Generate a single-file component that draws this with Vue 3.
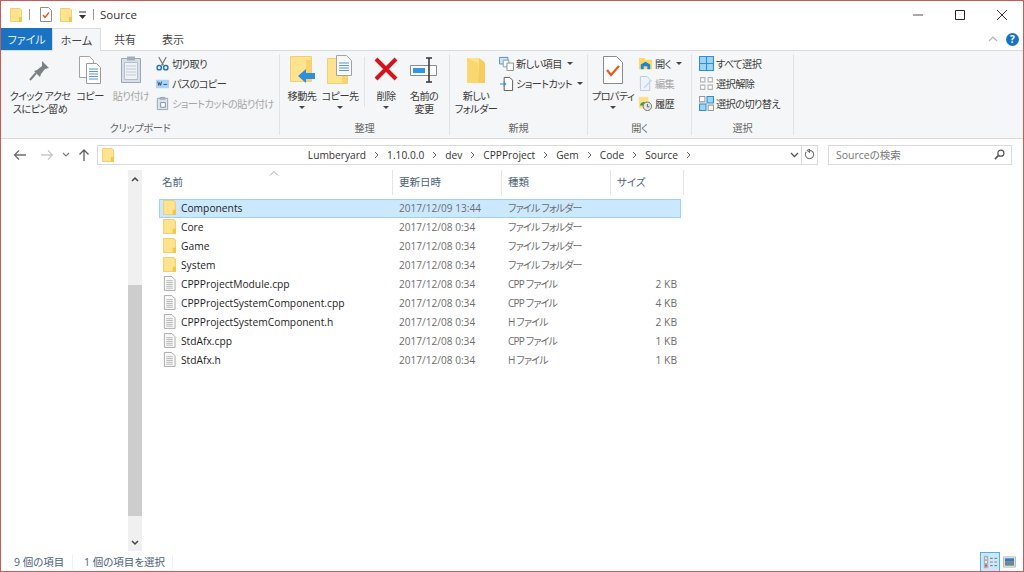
<template>
  <div class="window">
    <svg width="0" height="0" class="defs">
      <defs>
        <symbol id="folder" viewBox="0 0 12 14">
          <path d="M0.5 0.5h9.500l1.500 1.500v11.500h-11z" fill="#ffe38f" stroke="#f2cf73" stroke-width="1" />
          <path d="M9 9h3v5h-3z" fill="#f3c64c" />
        </symbol>
        <symbol id="doc" viewBox="0 0 14 16">
          <path d="M1.500 0.500h8l3.500 3.500v11.500h-11.500z" fill="#f8f8f8" stroke="#a8a8a8" />
          <path d="M3.500 5h7M3.500 7h7M3.500 9h7M3.500 11h7M3.500 13h7" stroke="#b4b4b4" stroke-width="1" />
        </symbol>
      </defs>
    </svg>

    <header class="titlebar">
      <svg class="qa-folder"><use href="#folder" /></svg>
      <i class="qa-sep"></i>
      <svg class="qa-check" viewBox="0 0 12 15">
        <path d="M.5.500h8l3 3v11h-11z" fill="#fff" stroke="#8f8f8f" />
        <path d="M3 8l2 2.500 4-5" fill="none" stroke="#e8541c" stroke-width="1.400" />
      </svg>
      <svg class="qa-folder second"><use href="#folder" /></svg>
      <svg class="qa-drop" viewBox="0 0 7 8">
        <path d="M0 1h7" stroke="#333" />
        <path d="M0 4h7l-3.500 4z" fill="#333" />
      </svg>
      <i class="qa-sep"></i>
      <span class="title">Source</span>
      <div class="win-btns">
        <svg viewBox="2 0 42 28"><path d="M18 14h10" stroke="#555" stroke-width="1" /></svg>
        <svg viewBox="2 0 42 28"><path d="M18.500 9.500h9v9h-9z" fill="none" stroke="#222" /></svg>
        <svg viewBox="2 0 42 28"><path d="M18 9l10 10M28 9l-10 10" stroke="#333" /></svg>
      </div>
    </header>

    <nav class="tabs">
      <div class="tab file">ファイル</div>
      <div class="tab active">ホーム</div>
      <div class="tab">共有</div>
      <div class="tab">表示</div>
      <div class="tab-right">
        <svg class="collapse" viewBox="0 0 10 6"><path d="M1 5l4-4 4 4" fill="none" stroke="#b5b5b5" stroke-width="1.200" /></svg>
        <span class="help">?</span>
      </div>
    </nav>

    <section class="ribbon">
      <div class="group g-clip">
        <div class="group-body">
          <div class="big w-pin">
            <svg class="big-ico" viewBox="0 0 28 30">
              <path d="M16 6l7 7-4 1-4 5-1 3-6-6 3-1 5-4z" fill="#7b7f86" />
              <path d="M10 18l-6 7" stroke="#7b7f86" stroke-width="2" />
            </svg>
            <span>クイック アクセ<br />スにピン留め</span>
          </div>
          <div class="big w-copy">
            <svg class="big-ico" viewBox="0 0 24 30">
              <path d="M1.500 1.500h10l4 4v17h-14z" fill="#fdfdfd" stroke="#a3a3a3" />
              <path d="M8.500 8.500h10l4 4v16h-14z" fill="#fff" stroke="#9a9a9a" />
              <path d="M11 14h9M11 16.500h9M11 19h9M11 21.500h9M11 24h9" stroke="#5a97d9" stroke-width="1.200" />
            </svg>
            <span>コピー</span>
          </div>
          <div class="big w-paste disabled">
            <svg class="big-ico" viewBox="0 0 24 30">
              <path d="M2.500 3.500h19v24h-19z" fill="#d8dfe9" stroke="#9aa6b6" />
              <path d="M5.500 7.500h13v17h-13z" fill="#eef1f6" stroke="#b5bdc9" />
              <path d="M8 1.500h8v4h-8z" fill="#a4aebb" />
              <path d="M7 11h10M7 14h10M7 17h10M7 20h10" stroke="#c2cad6" />
            </svg>
            <span>貼り付け</span>
          </div>
          <div class="small-col">
            <div class="small">
              <svg class="small-ico" viewBox="0 0 14 16">
                <path d="M3 1l5 9M11 1l-5 9" stroke="#7d7d7d" stroke-width="1.300" />
                <circle cx="3.500" cy="12.500" r="2.300" fill="none" stroke="#1d6fbf" stroke-width="1.500" />
                <circle cx="10.500" cy="12.500" r="2.300" fill="none" stroke="#1d6fbf" stroke-width="1.500" />
              </svg>
              <span>切り取り</span>
            </div>
            <div class="small">
              <svg class="small-ico" viewBox="0 0 14 16">
                <path d="M0 4h14v9h-14z" fill="#a9d3f2" />
                <path d="M2 6l1 4 1-3 1 3 1-4M8 9h4" fill="none" stroke="#34506c" />
              </svg>
              <span>パスのコピー</span>
            </div>
            <div class="small disabled">
              <svg class="small-ico" viewBox="0 0 14 16">
                <path d="M1.500 2.500h11v12h-11z" fill="#dbe3ee" stroke="#98a4b4" />
                <path d="M4 1h6v3h-6z" fill="#a4aebb" />
                <path d="M5 7h5v5h-5z" fill="#fff" stroke="#7d8ea3" />
              </svg>
              <span>ショートカットの貼り付け</span>
            </div>
          </div>
        </div>
        <div class="group-label">クリップボード</div>
      </div>

      <div class="group g-org">
        <div class="group-body">
          <div class="big w-move">
            <svg class="big-ico" viewBox="0 0 28 30">
              <path d="M2.500 1.500h21v25h-21z" fill="#ffe38f" stroke="#f2cf73" />
              <path d="M18 5h5v21h-5z" fill="#f7d56c" />
              <path d="M10 21l8-7v4h9v6h-9v4z" fill="#2f8fdf" />
            </svg>
            <span>移動先</span>
            <i class="caret"></i>
          </div>
          <div class="big w-copyto">
            <svg class="big-ico" viewBox="0 0 28 30">
              <path d="M1.500 3.500h20v25h-20z" fill="#ffe38f" stroke="#f2cf73" />
              <path d="M16 8h5v20h-5z" fill="#f7d56c" />
              <path d="M10.500.5h10l5 5v15h-15z" fill="#f8f8f8" stroke="#a3a3a3" />
              <path d="M13 8h10M13 10.500h10M13 13h10M13 15.500h10" stroke="#5a97d9" stroke-width="1.200" />
            </svg>
            <span>コピー先</span>
            <i class="caret"></i>
          </div>
          <i class="inner-sep"></i>
          <div class="big w-del">
            <svg class="big-ico" viewBox="0 0 24 30">
              <path d="M2 4l20 20M22 4l-20 20" stroke="#d3141c" stroke-width="4" />
            </svg>
            <span>削除</span>
            <i class="caret"></i>
          </div>
          <div class="big w-ren">
            <svg class="big-ico" viewBox="0 0 28 30">
              <path d="M.5 10.500h26v10h-26z" fill="#fbfbfb" stroke="#8c8c8c" />
              <path d="M3 13h12v5h-12z" fill="#2f96e8" />
              <path d="M16 3h6M16 27h6M19 3v24" stroke="#333" stroke-width="1.500" fill="none" />
            </svg>
            <span>名前の<br />変更</span>
          </div>
        </div>
        <div class="group-label">整理</div>
      </div>

      <div class="group g-new">
        <div class="group-body">
          <div class="big w-newf">
            <svg class="big-ico" viewBox="0 0 20 30">
              <path d="M1 3h12l6 4v21h-18z" fill="#ffe38f" />
              <path d="M1 3l11 5v20h-11z" fill="#fbd76f" />
              <path d="M13 3l6 5v20h-7z" fill="#f7ce5e" />
            </svg>
            <span>新しい<br />フォルダー</span>
          </div>
          <div class="small-col">
            <div class="small">
              <svg class="small-ico" viewBox="0 0 16 16">
                <path d="M.5 1.500h9v7h-9z" fill="#cfe3f5" stroke="#4d8fc9" />
                <path d="M4.500 4.500h6v7h-6z" fill="#fff" stroke="#7a9cc0" />
                <path d="M8.500 7.500h7v8h-7z" fill="#fff" stroke="#8c8c8c" />
              </svg>
              <span>新しい項目</span>
              <i class="caret inline"></i>
            </div>
            <div class="small">
              <svg class="small-ico" viewBox="0 0 16 16">
                <path d="M5.500 1.500h6l3 3v11h-9z" fill="#fff" stroke="#555" />
                <path d="M1 8h4V5.500L8 8.500l-3 3V9H1z" fill="#3d8fd1" />
              </svg>
              <span>ショートカット</span>
              <i class="caret inline"></i>
            </div>
          </div>
        </div>
        <div class="group-label">新規</div>
      </div>

      <div class="group g-open">
        <div class="group-body">
          <div class="big w-prop">
            <svg class="big-ico" viewBox="0 0 22 30">
              <path d="M1.500 1.500h13l6 6v21h-19z" fill="#fff" stroke="#8a8a8a" />
              <path d="M5 15l4 5 8-9" fill="none" stroke="#ea5a1c" stroke-width="2.200" />
            </svg>
            <span>プロパティ</span>
            <i class="caret"></i>
          </div>
          <div class="small-col">
            <div class="small">
              <svg class="small-ico" viewBox="0 0 16 16">
                <path d="M1 2h6l1 2h7v10h-14z" fill="#ffd765" />
                <path d="M3 14v-5l5-3 5 3v5h-3v-3h-4v3z" fill="#1a85d6" />
              </svg>
              <span>開く</span>
              <i class="caret inline"></i>
            </div>
            <div class="small disabled">
              <svg class="small-ico" viewBox="0 0 16 16">
                <path d="M2.500.5h7l3 3v12h-10z" fill="#eef3fa" stroke="#b9c8dc" />
                <path d="M6 12l8-8 1 1-8 8z" fill="#c5d5e8" />
              </svg>
              <span>編集</span>
            </div>
            <div class="small">
              <svg class="small-ico" viewBox="0 0 16 16">
                <path d="M1 1h10v12h-10z" fill="#ffdf83" />
                <path d="M2 10a4 4 0 0 1 6-3l-1 3h-5z" fill="#2fa336" />
                <circle cx="10" cy="11" r="4.500" fill="#e6e6e6" stroke="#6f6f6f" />
                <path d="M10 8.500v3h2" fill="none" stroke="#555" />
              </svg>
              <span>履歴</span>
            </div>
          </div>
        </div>
        <div class="group-label">開く</div>
      </div>

      <div class="group g-sel">
        <div class="group-body">
          <div class="small-col">
            <div class="small">
              <svg class="small-ico" viewBox="0 0 14 14">
                <path d="M.5.500h13v13h-13zM7 .5v13M.5 7h13" fill="#9fd4f7" stroke="#2d8fdc" />
              </svg>
              <span>すべて選択</span>
            </div>
            <div class="small">
              <svg class="small-ico" viewBox="0 0 14 14">
                <path d="M1.500 1.500h4v4h-4zM8.500 1.500h4v4h-4zM1.500 8.500h4v4h-4zM8.500 8.500h4v4h-4z" fill="#fff" stroke="#b3b3b3" />
              </svg>
              <span>選択解除</span>
            </div>
            <div class="small">
              <svg class="small-ico" viewBox="0 0 14 14">
                <path d="M.5.500h5v5h-5zM8.500 8.500h5v5h-5z" fill="#fff" stroke="#9a9a9a" />
                <path d="M7.500.5h6v6h-6zM.5 7.500h6v6h-6z" fill="#9fd4f7" stroke="#2d8fdc" />
              </svg>
              <span>選択の切り替え</span>
            </div>
          </div>
        </div>
        <div class="group-label">選択</div>
      </div>
    </section>

    <div class="addressbar">
      <div class="nav-btns">
        <svg viewBox="0 0 14 12" class="arrow"><path d="M13 6H2M6 1.500L1.500 6 6 10.500" fill="none" stroke="#6d6d6d" stroke-width="1.300" /></svg>
        <svg viewBox="0 0 14 12" class="arrow fwd"><path d="M1 6h11M8 1.500L12.500 6 8 10.500" fill="none" stroke="#c9c9c9" stroke-width="1.300" /></svg>
        <svg viewBox="0 0 8 6" class="chev"><path d="M1 1l3 3 3-3" fill="none" stroke="#7d7d7d" stroke-width="1.200" /></svg>
        <svg viewBox="0 0 12 14" class="arrow up"><path d="M6 13V2M1.500 6.500L6 2l4.500 4.500" fill="none" stroke="#5e5e5e" stroke-width="1.300" /></svg>
      </div>
      <div class="address">
        <svg class="addr-folder"><use href="#folder" /></svg>
        <div class="crumbs">
          <template v-for="c in crumbs" :key="c">
            <span>{{ c }}</span>
            <svg viewBox="0 0 5 8" class="crumb-sep"><path d="M1 1l3 3-3 3" fill="none" stroke="#666" /></svg>
          </template>
        </div>
        <svg viewBox="0 0 9 6" class="addr-chev"><path d="M1 1l3.500 3.500L8 1" fill="none" stroke="#555" stroke-width="1.300" /></svg>
        <div class="refresh">
          <svg viewBox="0 0 12 12"><path d="M6 1.500a4.500 4.500 0 1 1-3.500 1.700M6 0v3.500L3.500 1.700z" fill="none" stroke="#6d6d6d" stroke-width="1.100" /></svg>
        </div>
      </div>
      <div class="search">
        <span>Sourceの検索</span>
        <svg viewBox="0 0 12 12"><circle cx="7.500" cy="4.500" r="3.300" fill="none" stroke="#555" stroke-width="1.300" /><path d="M5 7l-4 4" stroke="#555" stroke-width="1.800" /></svg>
      </div>
    </div>

    <main class="content">
      <aside class="sidebar"></aside>
      <div class="scrollbar">
        <div class="sb-btn"><svg viewBox="0 0 8 6"><path d="M1 5l3-3 3 3" fill="none" stroke="#444" stroke-width="1.500" /></svg></div>
        <div class="sb-space top"></div>
        <div class="sb-thumb"></div>
        <div class="sb-space"></div>
        <div class="sb-btn"><svg viewBox="0 0 8 6"><path d="M1 1l3 3 3-3" fill="none" stroke="#444" stroke-width="1.500" /></svg></div>
      </div>
      <div class="list">
        <div class="list-head">
          <svg viewBox="0 0 10 5" class="sort"><path d="M1 4.500l4-4 4 4" fill="none" stroke="#a6a6a6" /></svg>
          <div class="col-h c-name">名前</div>
          <div class="col-h c-date">更新日時</div>
          <div class="col-h c-type">種類</div>
          <div class="col-h c-size">サイズ</div>
        </div>
        <div v-for="f in files" :key="f.name" class="row" :class="{ selected: f.selected }">
          <div class="c-name cell-name">
            <svg class="file-ico"><use :href="f.folder ? '#folder' : '#doc'" /></svg>
            <span>{{ f.name }}</span>
          </div>
          <div class="c-date cell date">{{ f.date }}</div>
          <div class="c-type cell type">{{ f.type }}</div>
          <div class="c-size cell right">{{ f.size }}</div>
        </div>
      </div>
    </main>

    <footer class="statusbar">
      <span class="st st1">9 個の項目</span>
      <span class="st st2">1 個の項目を選択</span>
      <div class="views">
        <div class="view on">
          <svg viewBox="0 0 18 16">
            <path d="M2 1h5v14h-5z" fill="#b0b0b0" />
            <path d="M3.500 3h2v2h-2zM3.500 7h2v2h-2z" fill="#eee" />
            <path d="M3.500 11h2v2h-2z" fill="#d84a3a" />
            <path d="M9 4h3M14 4h3M9 8h3M14 8h3M9 12h3M14 12h3" stroke="#7f8a90" stroke-width="1.300" />
          </svg>
        </div>
        <div class="view">
          <svg viewBox="0 0 14 12">
            <path d="M.5.500h13v11h-13z" fill="#eee" stroke="#b5b5b5" />
            <path d="M2 2h10v3h-10z" fill="#2f7cc4" />
            <path d="M2 5h10v5h-10z" fill="#6d8a86" />
          </svg>
        </div>
      </div>
    </footer>
  </div>
</template>

<script setup>
const crumbs = ['Lumberyard', '1.10.0.0', 'dev', 'CPPProject', 'Gem', 'Code', 'Source']

const folder = 'ファイル フォルダー'
const files = [
  { name: 'Components', date: '2017/12/09 13:44', type: folder, size: '', folder: true, selected: true },
  { name: 'Core', date: '2017/12/08 0:34', type: folder, size: '', folder: true },
  { name: 'Game', date: '2017/12/08 0:34', type: folder, size: '', folder: true },
  { name: 'System', date: '2017/12/08 0:34', type: folder, size: '', folder: true },
  { name: 'CPPProjectModule.cpp', date: '2017/12/08 0:34', type: 'CPP ファイル', size: '2 KB' },
  { name: 'CPPProjectSystemComponent.cpp', date: '2017/12/08 0:34', type: 'CPP ファイル', size: '4 KB' },
  { name: 'CPPProjectSystemComponent.h', date: '2017/12/08 0:34', type: 'H ファイル', size: '2 KB' },
  { name: 'StdAfx.cpp', date: '2017/12/08 0:34', type: 'CPP ファイル', size: '1 KB' },
  { name: 'StdAfx.h', date: '2017/12/08 0:34', type: 'H ファイル', size: '1 KB' }
]
</script>

<style>
html, body {
  margin: 0;
  background: #fff;
}
</style>

<style scoped>
.window {
  box-sizing: border-box;
  width: 1024px;
  height: 572px;
  border: 1px solid #c75c5c;
  background: #fff;
  display: flex;
  flex-direction: column;
  overflow: hidden;
  font-family: "Open Sans", "Noto Sans CJK JP", sans-serif;
  font-size: 11px;
  font-feature-settings: "palt";
  color: #3b3b3b;
}
.defs {
  position: absolute;
}
.titlebar {
  height: 27px;
  display: flex;
  align-items: center;
  padding-left: 9px;
  flex: none;
}
.qa-folder {
  width: 12px;
  height: 14px;
}
.qa-folder.second {
  margin-left: 8px;
}
.qa-sep {
  width: 1px;
  height: 11px;
  background: #9a9a9a;
  margin: 0 10px 0 7px;
}
.qa-check {
  width: 12px;
  height: 15px;
}
.qa-drop {
  width: 7px;
  height: 8px;
  margin-left: 7px;
}
.title {
  font-size: 11.500px;
  margin-left: -4px;
  color: #333;
}
.win-btns {
  margin-left: auto;
  display: flex;
}
.win-btns svg {
  width: 42px;
  height: 28px;
}
.tabs {
  height: 22px;
  flex: none;
  display: flex;
  border-bottom: 1px solid #dadbdc;
  box-sizing: content-box;
}
.tab {
  width: 48px;
  text-align: center;
  line-height: 23px;
  font-size: 11px;
  color: #444;
}
.tab.file {
  width: 51px;
  background: #1a73c2;
  color: #e4effa;
  height: 22px;
}
.tab.active {
  width: 49px;
  box-sizing: border-box;
  background: #f5f6f7;
  border: 1px solid #dadbdc;
  border-bottom: none;
  height: 23px;
}
.tab-right {
  margin-left: auto;
  display: flex;
  align-items: center;
  padding-right: 4px;
  gap: 8px;
}
.collapse {
  width: 10px;
  height: 6px;
}
.help {
  width: 13px;
  height: 13px;
  border-radius: 50%;
  background: #1a73c2;
  color: #fff;
  font-size: 10px;
  font-weight: 700;
  line-height: 13px;
  text-align: center;
}
.ribbon {
  height: 87px;
  flex: none;
  display: flex;
  background: #f5f6f7;
  border-bottom: 1px solid #dadbdc;
}
.group {
  display: flex;
  flex-direction: column;
  box-sizing: border-box;
  margin: 3px 0 3px;
  border-right: 1px solid #e2e3e4;
}
.g-clip { width: 279px; }
.g-org { width: 170px; }
.g-new { width: 138px; }
.g-open { width: 104px; }
.g-sel { width: 102px; }
.group-body {
  flex: 1;
  display: flex;
  align-items: flex-start;
  padding-top: 1px;
}
.group-label {
  text-align: center;
  font-size: 10.200px;
  letter-spacing: -0.3px;
  color: #666;
  line-height: 14px;
}
.big {
  position: relative;
  display: flex;
  flex-direction: column;
  align-items: center;
  text-align: center;
  line-height: 13px;
  font-size: 10.200px;
  letter-spacing: -0.6px;
  white-space: nowrap;
}
.big-ico {
  width: 28px;
  height: 30px;
  margin-bottom: 5px;
}
.disabled {
  color: #a5a5a5;
}
.w-pin { width: 64px; margin-left: 7px; }
.w-copy { width: 24px; margin-left: 6px; }
.w-copy .big-ico { width: 24px; }
.w-paste { width: 40px; margin-left: 9px; }
.w-paste .big-ico { width: 24px; }
.g-clip .small-col { margin-left: 4px; }
.w-move { width: 36px; margin-left: 4px; }
.w-copyto { width: 36px; margin-left: 2px; }
.inner-sep {
  width: 1px;
  height: 50px;
  background: #e2e3e4;
  margin: 2px 9px 0 6px;
}
.w-del { width: 24px; }
.w-del .big-ico { width: 24px; }
.w-ren { width: 32px; margin-left: 10px; }
.w-newf { width: 40px; margin-left: 6px; }
.w-newf .big-ico { width: 20px; }
.g-new .small-col { margin-left: 3px; }
.w-prop { width: 44px; margin-left: 3px; }
.w-prop .big-ico { width: 22px; }
.g-open .small-col { margin-left: 3px; }
.g-sel .small-col { margin-left: 7px; }
.caret {
  width: 0;
  height: 0;
  border: 3px solid transparent;
  border-top-color: #444;
  border-bottom: none;
  margin-top: 3px;
}
.caret.inline {
  margin: 0 0 0 5px;
}
.small-col {
  display: flex;
  flex-direction: column;
  gap: 3px;
}
.small {
  height: 17px;
  display: flex;
  align-items: center;
  font-size: 10.200px;
  letter-spacing: -0.6px;
  white-space: nowrap;
}
.small-ico {
  width: 15px;
  height: 15px;
  margin-right: 2px;
  flex: none;
}
.addressbar {
  height: 31px;
  flex: none;
  display: flex;
  align-items: center;
}
.nav-btns {
  width: 96px;
  position: relative;
  display: flex;
  align-items: center;
  padding-left: 12px;
  box-sizing: border-box;
}
.arrow {
  width: 14px;
  height: 12px;
}
.arrow.fwd {
  margin-left: 13px;
}
.chev {
  width: 8px;
  height: 6px;
  margin-left: 8px;
}
.arrow.up {
  width: 12px;
  height: 14px;
  margin-left: 8px;
}
.address {
  width: 721px;
  height: 20px;
  box-sizing: border-box;
  border: 1px solid #d9d9d9;
  display: flex;
  align-items: center;
  padding-left: 4px;
}
.addr-folder {
  width: 12px;
  height: 14px;
  flex: none;
}
.crumbs {
  flex: 1;
  display: flex;
  justify-content: flex-end;
  align-items: center;
  color: #333;
  font-size: 10.200px;
  padding-right: 91px;
}
.crumb-sep {
  width: 5px;
  height: 8px;
  margin: 0 8px;
}
.addr-chev {
  width: 9px;
  height: 6px;
  margin-right: 2px;
}
.refresh {
  width: 15px;
  height: 18px;
  border-left: 1px solid #d9d9d9;
  display: flex;
  align-items: center;
  justify-content: center;
}
.refresh svg {
  width: 11px;
  height: 11px;
}
.search {
  width: 184px;
  height: 20px;
  box-sizing: border-box;
  margin-left: 10px;
  border: 1px solid #d9d9d9;
  display: flex;
  align-items: center;
  justify-content: space-between;
  padding: 0 6px 0 7px;
  color: #777;
  font-size: 10.500px;
}
.search svg {
  width: 11px;
  height: 11px;
}
.content {
  flex: 1;
  display: flex;
  min-height: 0;
}
.sidebar {
  width: 127px;
  flex: none;
}
.scrollbar {
  width: 14px;
  flex: none;
  background: #f0f0f0;
  display: flex;
  flex-direction: column;
  margin-bottom: 2px;
}
.sb-btn {
  height: 17px;
  flex: none;
  display: flex;
  align-items: center;
  justify-content: center;
}
.sb-btn svg {
  width: 8px;
  height: 6px;
}
.sb-space {
  flex: 1;
}
.sb-space.top {
  flex: none;
  height: 98px;
}
.sb-thumb {
  height: 231px;
  flex: none;
  background: #cdcdcd;
}
.list {
  margin-left: 17px;
  width: 525px;
  position: relative;
}
.list-head {
  height: 25px;
  display: flex;
  margin-bottom: 4px;
}
.sort {
  position: absolute;
  left: 110px;
  top: 1px;
  width: 10px;
  height: 5px;
}
.col-h {
  box-sizing: border-box;
  padding-left: 6px;
  font-size: 10.500px;
  color: #4c607a;
  border-right: 1px solid #e5e5e5;
  line-height: 25px;
}
.c-name { width: 234px; flex: none; box-sizing: border-box; }
.c-date { width: 109px; flex: none; box-sizing: border-box; }
.c-type { width: 109px; flex: none; box-sizing: border-box; }
.c-size { width: 73px; flex: none; box-sizing: border-box; }
.col-h.c-name { padding-left: 3px; }
.row {
  height: 19px;
  width: 522px;
  display: flex;
  align-items: center;
  box-sizing: border-box;
  border: 1px solid transparent;
  padding-bottom: 2px;
  font-size: 10.250px;
}
.row.selected {
  background: #cce8ff;
  border-color: #99d1ff;
}
.cell-name {
  display: flex;
  align-items: center;
  padding-left: 4px;
  color: #1e1e1e;
  margin-left: -1px;
}
.file-ico {
  width: 13px;
  height: 15px;
  margin-right: 5px;
  flex: none;
}
.cell {
  padding-left: 6px;
  color: #6d6d6d;
  white-space: nowrap;
}
.cell.date {
  font-size: 10.100px;
}
.cell.type {
  font-size: 10px;
  letter-spacing: -0.8px;
}
.cell.right {
  text-align: right;
  padding-right: 4px;
  width: 70px;
}
.statusbar {
  height: 18px;
  flex: none;
  display: flex;
  align-items: center;
  font-size: 10.500px;
  color: #4c607a;
  position: relative;
}
.st {
  border-right: 1px solid #f0f0f0;
  padding-left: 13px;
  box-sizing: border-box;
  line-height: 14px;
}
.st1 { width: 72px; }
.st2 { width: 100px; padding-left: 11px; white-space: nowrap; }
.views {
  margin-left: auto;
  display: flex;
  align-items: center;
  padding-right: 7px;
  gap: 3px;
}
.view {
  width: 13px;
  height: 12px;
  display: flex;
}
.view svg {
  width: 100%;
  height: 100%;
}
.view.on {
  width: 20px;
  height: 20px;
  box-sizing: border-box;
  background: #cce8ff;
  border: 1px solid #4db2ea;
  padding: 1px;
}
</style>
